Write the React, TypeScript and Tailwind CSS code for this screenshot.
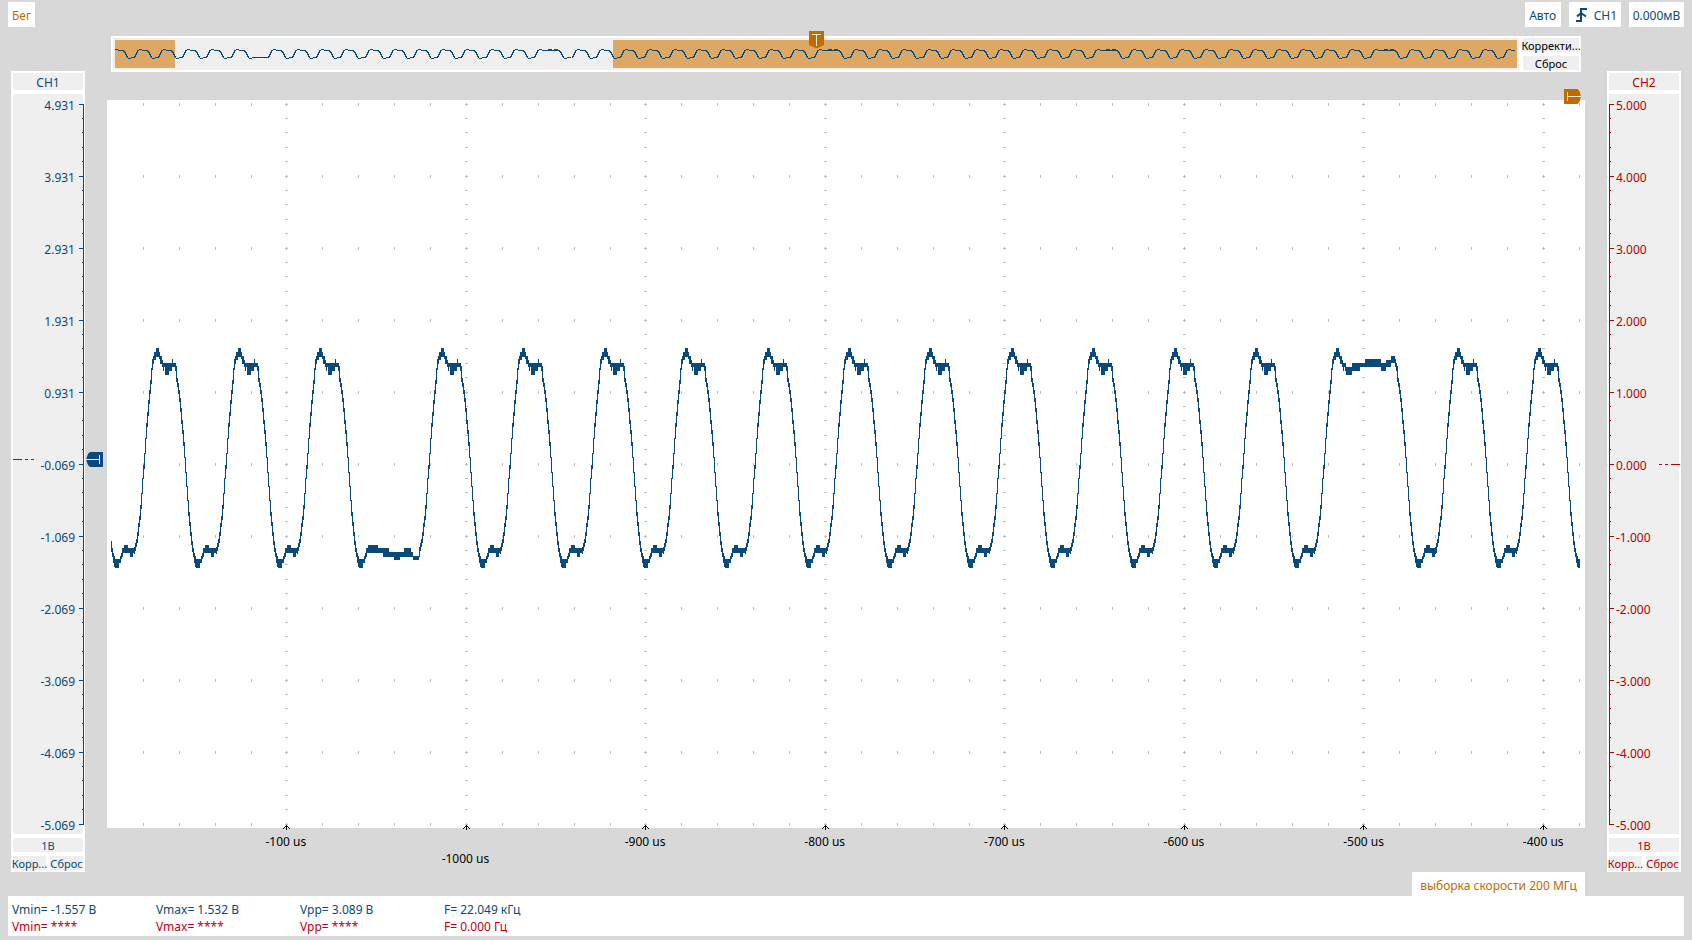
import React from "react";

type Band = [column: number, top: number, bottom: number];

const BLUE = "#0a4a7a";
const RED = "#b80000";

/* ---------- main trace: column bands relative to a crest ---------- */

const spans = (list: [number, number, number, number][]): Band[] =>
  list.flatMap(([from, to, top, bottom]) => {
    const out: Band[] = [];
    for (let c = from; c <= to; c++) out.push([c, top, bottom]);
    return out;
  });

const slope = (start: number, ys: number[], soft = 1): Band[] =>
  ys.slice(1).map((y, i) => {
    const extra = Math.abs(ys[i] - y) < 13 ? soft : 1;
    return [start + i, Math.min(ys[i], y), Math.max(ys[i], y) + extra];
  });

const RISE = slope(-23, [550, 547, 543, 539, 532, 523, 516, 505, 493, 478, 465, 453, 438, 423, 412, 400, 390, 380, 368], 4);

const CREST = spans([
  [-5, -5, 359, 370], [-4, -4, 356, 364], [-3, -2, 352, 360], [-1, 1, 348, 357],
  [2, 2, 352, 359], [3, 4, 356, 364], [5, 5, 360, 367], [6, 6, 363, 371], [7, 7, 363, 367],
]);
const CREST_END = spans([[8, 11, 363, 375], [12, 14, 363, 371], [15, 15, 359, 367], [16, 17, 363, 367], [18, 18, 363, 371]]);
const CREST_LONG_END = spans([
  [8, 8, 363, 371], [9, 14, 367, 375], [15, 22, 363, 371], [23, 27, 363, 367], [28, 43, 359, 367],
  [44, 48, 363, 371], [49, 53, 360, 367], [54, 57, 356, 363], [58, 58, 359, 367], [59, 59, 363, 371],
]);

const FALL = slope(19, [366, 378, 383, 390, 398, 408, 420, 430, 442, 457, 472, 486, 500, 512, 522, 532, 541, 548, 553], 4);

const TROUGH = spans([
  [37, 37, 553, 563], [38, 38, 556, 567], [39, 42, 559, 568], [43, 43, 559, 563], [44, 44, 556, 563],
  [45, 45, 553, 559], [46, 46, 548, 557], [47, 47, 548, 553],
]);
const TROUGH_END = spans([[48, 51, 545, 553], [52, 53, 548, 553], [54, 56, 548, 557], [57, 58, 548, 553]]);
const TROUGH_LONG_END = spans([
  [48, 57, 545, 553], [58, 62, 548, 553], [63, 68, 548, 557], [69, 73, 552, 557], [74, 79, 552, 560],
  [80, 83, 552, 557], [84, 90, 548, 557], [91, 92, 552, 557], [93, 98, 556, 560], [99, 99, 550, 557],
]);

const shift = (bands: Band[], by: number): Band[] => bands.map(([c, t, b]) => [c + by, t, b]);

const toPath = (bands: Band[], from: number, to: number) =>
  bands
    .filter(([c]) => c >= from && c < to)
    .map(([c, t, b]) => `M${c} ${t}h1V${b}h-1z`)
    .join("");

function mainTrace() {
  const crests = [76, 157, 239, 320];
  for (let k = 0; k < 12; k++) crests.push(Math.round(442 + k * 81.4));
  crests.push(1458, 1539);
  const bands: Band[] = [];
  crests.forEach((p) => {
    const longHigh = p === 1337;
    const longLow = p === 320;
    const extra = longHigh ? 41 : 0;
    bands.push(...shift(RISE, p), ...shift(CREST, p));
    bands.push(...shift(longHigh ? CREST_LONG_END : CREST_END, p));
    bands.push(...shift(FALL, p + extra), ...shift(TROUGH, p + extra));
    bands.push(...shift(longLow ? TROUGH_LONG_END : TROUGH_END, p + extra));
  });
  return toPath(bands, 111, 1580);
}

/* ---------- overview trace ---------- */

function overviewTrace() {
  const up = [57, 56, 54, 52, 50];
  const down = [50, 51, 52, 54, 56, 57];
  const runs: [first: number, count: number, end: "low" | "high" | "none"][] = [
    [113.5, 6, "low"], [271.7, 12, "high"], [575.7, 11, "high"], [854, 11, "high"],
    [1131.7, 11, "high"], [1410, 5, "none"],
  ];
  const bands: Band[] = [];
  runs.forEach(([first, count, end]) => {
    for (let k = 0; k < count; k++) {
      const p = Math.round(first + k * 24.2);
      const last = k === count - 1;
      const high = last && end === "high" ? 21 : 9;
      const low = last && end === "low" ? 32 : 20;
      bands.push(...shift(slope(-4, up), p));
      bands.push(...spans([[p, p, 50, 51], [p + 1, p + 3, 49, 50], [p + 4, p + high - 1, 50, 51]]));
      if (high > 9) bands.push(...spans([[p + 10, p + 13, 49, 50], [p + 16, p + 19, 49, 50]]));
      bands.push(...shift(slope(high, down), p));
      const bottom = p + high + 5;
      bands.push(...spans([[bottom, bottom + 2, 58, 59], [bottom + 3, p + low + (high - 9), 57, 58]]));
    }
  });
  return toPath(bands, 115, 1515);
}

const MAIN_TRACE = mainTrace();
const OVERVIEW_TRACE = overviewTrace();

/* ---------- graticule ---------- */

const MAJORS = [286, 466, 645, 825, 1004, 1184, 1363, 1543];

function graticule() {
  const columns = [143, 179, 215, 251];
  MAJORS.forEach((m) => {
    for (let k = 0; k < 5; k++) if (m + k * 36 < 1585) columns.push(m + k * 36);
  });
  let d = "";
  columns.forEach((x) => {
    for (let r = 0; r <= 10; r++) d += `M${x} ${103 + r * 72}h1v3h-1z`;
  });
  MAJORS.forEach((x) => {
    for (let r = 0; r <= 50; r++) d += `M${x - 1} ${Math.floor(104 + r * 14.4)}h3v1h-3z`;
  });
  return d;
}
const GRATICULE = graticule();

/* ---------- pieces ---------- */

const ch1Scale = ["4.931", "3.931", "2.931", "1.931", "0.931", "-0.069", "-1.069", "-2.069", "-3.069", "-4.069", "-5.069"];
const ch2Scale = ["5.000", "4.000", "3.000", "2.000", "1.000", "0.000", "-1.000", "-2.000", "-3.000", "-4.000", "-5.000"];
const times = ["-100 us", "-1000 us", "-900 us", "-800 us", "-700 us", "-600 us", "-500 us", "-400 us"];

function Ruler({ mirrored, zero }: { mirrored?: boolean; zero: number }) {
  let d = mirrored ? "M0 10h1v721h-1z" : "M70 10h1v721h-1z";
  for (let i = 0; i <= 50; i++) {
    const y = Math.floor(10 + i * 14.4);
    const len = i % 5 === 0 ? 4 : 1;
    d += mirrored ? `M1 ${y}h${len}v1h-${len}z` : `M${70 - len} ${y}h${len}v1h-${len}z`;
  }
  d += mirrored
    ? `M50 ${zero}h3v1h-3zM56 ${zero}h3v1h-3zM62 ${zero}h9v1h-9z`
    : `M0 ${zero}h9v1h-9zM12 ${zero}h3v1h-3zM18 ${zero}h3v1h-3z`;
  return (
    <svg
      aria-hidden="true"
      className="absolute inset-y-0 left-0 h-full w-[71px]"
      viewBox="0 0 71 740"
      preserveAspectRatio="none"
      shapeRendering="crispEdges"
    >
      <path d={d} fill={mirrored ? RED : BLUE} />
    </svg>
  );
}

function ChannelPanel({ name, scale, mirrored, zero }: { name: string; scale: string[]; mirrored?: boolean; zero: number }) {
  return (
    <section
      aria-label={name}
      className={`mt-[35px] flex w-[74px] shrink-0 flex-col gap-1 bg-white p-0.5 ${mirrored ? "text-[#b80000]" : "text-[#0a4a7a]"}`}
    >
      <button type="button" className="h-[17px] bg-[#efefef] text-center leading-5">{name}</button>
      <div className="relative flex-1 bg-[#efefef]">
        <Ruler mirrored={mirrored} zero={zero} />
        <ul className={`flex h-full flex-col justify-between ${mirrored ? "pl-[7px] text-left" : "pr-2 text-right"}`}>
          {scale.map((v) => (
            <li key={v} className="h-5 leading-6">{v}</li>
          ))}
        </ul>
      </div>
      <button type="button" className="h-3.5 bg-[#efefef] text-center text-[11px] leading-4">1В</button>
      <div className="flex h-3.5 gap-1 text-[11px] leading-4">
        <button type="button" className="flex min-w-0 flex-1 justify-center whitespace-nowrap bg-[#efefef]">Корр...</button>
        <button type="button" className="flex min-w-0 flex-1 justify-center whitespace-nowrap bg-[#efefef]">Сброс</button>
      </div>
    </section>
  );
}

function Overview() {
  return (
    <div className="relative mx-1 flex h-9 gap-1 bg-white p-0.5">
      <div className="min-w-0 flex-1 bg-[#efefef]">
        <svg
          role="img"
          aria-label="CH1"
          className="h-full w-full"
          viewBox="113 38 1406 32"
          preserveAspectRatio="none"
          shapeRendering="crispEdges"
        >
          <rect x="115" y="40" width="60" height="28" fill="#dda864" />
          <rect x="613" y="40" width="904" height="28" fill="#dda864" />
          <path d={OVERVIEW_TRACE} fill={BLUE} />
        </svg>
      </div>
      <div className="flex w-14 flex-col gap-1 text-[11px] leading-4 text-black">
        <button type="button" className="flex h-3.5 justify-center whitespace-nowrap bg-[#efefef]">Корректи...</button>
        <button type="button" className="flex h-3.5 justify-center whitespace-nowrap bg-[#efefef]">Сброс</button>
      </div>
      <svg aria-hidden="true" className="absolute -top-[5px] left-[47.5%] h-[17px] w-[15px]" viewBox="0 0 15 17">
        <path d="M0 0h15v14l-7.500 3.500L0 14z" fill="#bf6b00" />
        <path d="M3 3.500h9M7.500 3.500V15" stroke="#f3e6d2" fill="none" />
      </svg>
    </div>
  );
}

const readings = [
  { color: "text-[#0a4a7a]", cells: ["Vmin= -1.557 В", "Vmax= 1.532 В", "Vpp= 3.089 В", "F= 22.049 кГц"] },
  { color: "text-[#c00010]", cells: ["Vmin= ****", "Vmax= ****", "Vpp= ****", "F= 0.000 Гц"] },
];

export default function App() {
  return (
    <div className="flex min-h-screen flex-col bg-[#d8d8d8] px-2 pb-1 font-['Noto_Sans','Open_Sans',sans-serif] text-[12px] text-[#0a4a7a]">
      <header className="flex h-9 items-start gap-2 pt-0.5 leading-[18px]">
        <button type="button" className="mr-auto h-[25px] min-w-[27px] bg-white px-1 pt-0.5 text-[#bf6b00]">Бег</button>
        <button type="button" className="h-[25px] min-w-9 bg-white px-1 pt-0.5">Авто</button>
        <button type="button" className="flex h-[25px] min-w-[52px] items-center gap-1.5 bg-white pr-1 pl-[7px]">
          <svg aria-hidden="true" className="h-3.5 w-3" viewBox="0 0 12 14" fill="none" stroke={BLUE} strokeWidth="2">
            <path d="M0 13h5V1h6" />
            <path d="M1 8.500L5 5l5 3.500" />
          </svg>
          <span className="pt-0.5">CH1</span>
        </button>
        <button type="button" className="h-[25px] min-w-[55px] bg-white px-[3px] pt-0.5">0.000мВ</button>
      </header>

      <main className="flex flex-1 flex-col">
        <div className="flex flex-1 px-[3px]">
          <ChannelPanel name="CH1" scale={ch1Scale} zero={365} />
          <div className="relative w-[22px] shrink-0">
            <svg aria-hidden="true" className="absolute top-[416px] left-px h-[15px] w-[17px]" viewBox="0 0 17 15">
              <path d="M17 0H4L2 2L0 7.500L2 13L4 15H17z" fill={BLUE} />
              <path d="M0 7.500H13.500M13.500 3v9" stroke="#e8eef3" fill="none" />
            </svg>
          </div>

          <div className="flex min-w-0 flex-1 flex-col">
            <Overview />
            <div className="relative mt-7 flex-1 bg-white">
              <svg
                role="img"
                aria-label="CH1"
                className="absolute inset-0 h-full w-full overflow-visible"
                viewBox="107 100 1478 728"
                preserveAspectRatio="none"
                shapeRendering="crispEdges"
              >
                <path d={GRATICULE} fill="#bfbfbf" />
                <path d={MAIN_TRACE} fill={BLUE} />
                {MAJORS.map((x) => (
                  <path
                    key={x}
                    d={`M${x} 825h1v5h-1zM${x - 1} 826h3v1h-3zM${x - 2} 827h1v1h-1zM${x + 2} 827h1v1h-1zM${x - 3} 828h1v1h-1zM${x + 3} 828h1v1h-1z`}
                    fill="#000"
                  />
                ))}
              </svg>
              <svg aria-hidden="true" className="absolute -top-[11px] right-1 h-[15px] w-[17px]" viewBox="0 0 17 15">
                <path d="M0 0h13.500L15.500 2L17 7.500L15.500 13L13.500 15H0z" fill="#bf6b00" />
                <path d="M3.500 3v9M3.500 7.500H17" stroke="#f3e6d2" fill="none" />
              </svg>
            </div>
            <ol className="mr-[-48px] ml-[89px] grid h-11 grid-cols-8 pt-[5px] text-center leading-[17px] text-black">
              {times.map((t, i) => (
                <li key={t} className={i === 1 ? "pt-[17px]" : ""}>{t}</li>
              ))}
            </ol>
          </div>

          <div className="w-[22px] shrink-0" />
          <ChannelPanel name="CH2" scale={ch2Scale} mirrored zero={370} />
        </div>

        <p className="mr-[99px] h-6 min-w-[173px] self-end bg-white px-1 text-center leading-7 text-[#bf6b00]">выборка скорости 200 МГц</p>
      </main>

      <footer className="h-10 bg-white pt-[5px] pl-1">
        <table className="table-fixed border-collapse">
          <tbody>
            {readings.map((r) => (
              <tr key={r.color} className={r.color}>
                {r.cells.map((c) => (
                  <td key={c} className="w-36 p-0 leading-[17px]">{c}</td>
                ))}
              </tr>
            ))}
          </tbody>
        </table>
      </footer>
    </div>
  );
}
